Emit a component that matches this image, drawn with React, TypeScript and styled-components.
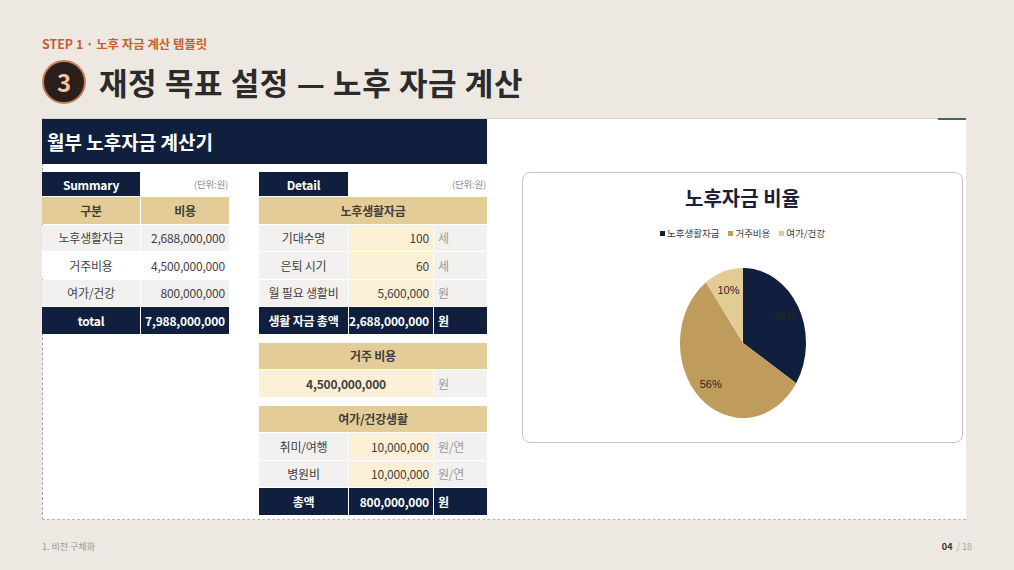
import styled, { createGlobalStyle, css } from "styled-components";

type Tone = "navy" | "gold" | "grey" | "white" | "cream" | "plain";

interface CellProps {
  $tone?: Tone;
  $align?: "left" | "center" | "right";
  $span?: number;
  $bold?: boolean;
  $muted?: boolean;
}

interface Slice {
  label: string;
  value: number;
  color: string;
}

const NAVY = "#0f1f3d";
const GOLD = "#e4cc98";

const toneColors: Record<Tone, string> = {
  navy: NAVY,
  gold: GOLD,
  grey: "#f2f1ef",
  white: "#ffffff",
  cream: "#fbefd6",
  plain: "transparent",
};

const slices: Slice[] = [
  { label: "노후생활자금", value: 34, color: "#0f1f3d" },
  { label: "거주비용", value: 56, color: "#bf9b5c" },
  { label: "여가/건강", value: 10, color: "#e2cb94" },
];

const GlobalStyle = createGlobalStyle`
  html, body {
    margin: 0;
    padding: 0;
    background: #ede8e2;
  }
  body {
    font-family: "Noto Sans CJK KR", "Noto Sans", sans-serif;
  }
`;

const Page = styled.div`
  width: 1014px;
  height: 570px;
  box-sizing: border-box;
  padding: 36px 42px 0 42px;
  background: #ede8e2;
  display: flex;
  flex-direction: column;
  overflow: hidden;
`;

const Eyebrow = styled.div`
  font-size: 12.4px;
  line-height: 16px;
  font-weight: 700;
  color: #c4622d;
`;

const TitleRow = styled.div`
  display: flex;
  align-items: center;
  gap: 13px;
  margin-top: 7px;
  height: 45px;
`;

const Badge = styled.div`
  width: 44px;
  height: 44px;
  box-sizing: border-box;
  border-radius: 50%;
  border: 2px solid #c9805a;
  background: #2a1f1b;
  color: #f2c3a5;
  display: flex;
  align-items: center;
  justify-content: center;
  font-size: 24px;
  font-weight: 700;
`;

const Heading = styled.h1`
  margin: 0;
  font-size: 31px;
  font-weight: 700;
  color: #2b2b2b;
  letter-spacing: 0.6px;
`;

const Panel = styled.div`
  position: relative;
  margin-top: 14px;
  width: 924px;
  height: 402px;
  box-sizing: border-box;
  background: #ffffff;
  border-top: 1px solid #d6d4d0;
  border-left: 1px dashed #a9a5a0;
  border-bottom: 1px dashed #b9b5b0;

  &::after {
    content: "";
    position: absolute;
    top: -1px;
    right: 0;
    width: 28px;
    height: 2px;
    background: #3c6a4c;
  }
`;

const PanelTitle = styled.div`
  width: 445px;
  height: 45px;
  margin-left: -1px;
  background: ${NAVY};
  color: #ffffff;
  font-size: 19px;
  font-weight: 700;
  display: flex;
  align-items: center;
  padding-left: 5px;
  box-sizing: border-box;
`;

const PanelBody = styled.div`
  display: flex;
  align-items: flex-start;
  margin-top: 8px;
  margin-left: -1px;
`;

const SummaryGrid = styled.div`
  display: grid;
  grid-template-columns: 98px 88px;
  grid-template-rows: 24px;
  grid-auto-rows: 26.5px;
  gap: 1px;
`;

const DetailColumn = styled.div`
  display: flex;
  flex-direction: column;
  gap: 9px;
  margin-left: 30px;
`;

const DetailGrid = styled.div<{ $header?: boolean }>`
  display: grid;
  grid-template-columns: 89px 84px 53px;
  ${(p) =>
    p.$header &&
    css`
      grid-template-rows: 24px;
    `}
  grid-auto-rows: 26.5px;
  gap: 1px;
`;

const Cell = styled.div<CellProps>`
  grid-column: span ${(p) => p.$span ?? 1};
  background: ${(p) => toneColors[p.$tone ?? "white"]};
  color: ${(p) =>
    p.$tone === "navy" ? "#ffffff" : p.$muted ? "#9a9a9a" : "#3f3f3f"};
  font-size: 12px;
  font-weight: ${(p) => (p.$bold || p.$tone === "navy" ? 700 : 400)};
  display: flex;
  align-items: center;
  justify-content: ${(p) =>
    p.$align === "left"
      ? "flex-start"
      : p.$align === "right"
      ? "flex-end"
      : "center"};
  padding: 0 4px;
  white-space: nowrap;
  box-sizing: border-box;
  letter-spacing: -0.2px;
`;

const UnitNote = styled(Cell)`
  font-size: 9.5px;
  color: #8c8c8c;
  padding-right: 1px;
`;

const ChartCard = styled.div`
  margin-left: 35px;
  width: 441px;
  height: 271px;
  box-sizing: border-box;
  border: 1px solid #c5c5c5;
  border-radius: 8px;
  display: flex;
  flex-direction: column;
  align-items: center;
  padding-top: 12px;
`;

const ChartTitle = styled.div`
  font-size: 20px;
  line-height: 26px;
  font-weight: 700;
  color: #1b1f38;
`;

const Legend = styled.div`
  display: flex;
  gap: 9px;
  margin-top: 15px;
  font-size: 9.5px;
  line-height: 14px;
  color: #3a3a3a;
`;

const LegendItem = styled.span`
  display: flex;
  align-items: center;
  gap: 2px;
`;

const Swatch = styled.span<{ $color: string }>`
  width: 5px;
  height: 5px;
  background: ${(p) => p.$color};
`;

const PieSvg = styled.svg`
  margin-top: 26px;
  display: block;
`;

const Footer = styled.div`
  display: flex;
  justify-content: space-between;
  align-items: center;
  margin-top: 20px;
  font-size: 9px;
  color: #9d9893;
`;

const PageNum = styled.span`
  color: #a8a39e;

  b {
    color: #333333;
    font-weight: 700;
    margin-right: 4px;
  }
`;

const Pie = ({ data }: { data: Slice[] }) => {
  const w = 130;
  const h = 154;
  const cx = 65;
  const cy = 77;
  const rx = 63;
  const ry = 75;
  const total = data.reduce((s, d) => s + d.value, 0);
  const point = (deg: number, k = 1) => {
    const r = (deg * Math.PI) / 180;
    return [cx + rx * k * Math.sin(r), cy - ry * k * Math.cos(r)];
  };
  let start = 0;
  return (
    <PieSvg width={w} height={h} viewBox={`0 0 ${w} ${h}`}>
      {data.map((d) => {
        const sweep = (d.value / total) * 360;
        const end = start + sweep;
        const [x1, y1] = point(start);
        const [x2, y2] = point(end);
        const [lx, ly] = point(start + sweep / 2, 0.75);
        const large = sweep > 180 ? 1 : 0;
        start = end;
        return (
          <g key={d.label}>
            <path
              d={`M ${cx} ${cy} L ${x1} ${y1} A ${rx} ${ry} 0 ${large} 1 ${x2} ${y2} Z`}
              fill={d.color}
            />
            <text
              x={lx}
              y={ly + 4}
              textAnchor="middle"
              fontSize="11"
              fontFamily="'Liberation Sans Narrow', 'Liberation Sans', Arial, sans-serif"
              fill="#2b2620"
            >
              {d.value}%
            </text>
          </g>
        );
      })}
    </PieSvg>
  );
};

export default function App() {
  return (
    <>
      <GlobalStyle />
      <Page>
        <Eyebrow>STEP 1 · 노후 자금 계산 템플릿</Eyebrow>
        <TitleRow>
          <Badge>3</Badge>
          <Heading>재정 목표 설정 — 노후 자금 계산</Heading>
        </TitleRow>

        <Panel>
          <PanelTitle>월부 노후자금 계산기</PanelTitle>
          <PanelBody>
            <SummaryGrid>
              <Cell $tone="navy">Summary</Cell>
              <UnitNote $tone="plain" $align="right">
                (단위:원)
              </UnitNote>
              <Cell $tone="gold" $bold>구분</Cell>
              <Cell $tone="gold" $bold>비용</Cell>
              <Cell $tone="grey">노후생활자금</Cell>
              <Cell $tone="grey" $align="right">2,688,000,000</Cell>
              <Cell $tone="white">거주비용</Cell>
              <Cell $tone="white" $align="right">4,500,000,000</Cell>
              <Cell $tone="grey">여가/건강</Cell>
              <Cell $tone="grey" $align="right">800,000,000</Cell>
              <Cell $tone="navy">total</Cell>
              <Cell $tone="navy" $align="right">7,988,000,000</Cell>
            </SummaryGrid>

            <DetailColumn>
              <DetailGrid $header>
                <Cell $tone="navy">Detail</Cell>
                <UnitNote $tone="plain" $align="right" $span={2}>
                  (단위:원)
                </UnitNote>
                <Cell $tone="gold" $bold $span={3}>노후생활자금</Cell>
                <Cell $tone="grey">기대수명</Cell>
                <Cell $tone="cream" $align="right">100</Cell>
                <Cell $tone="grey" $align="left" $muted>세</Cell>
                <Cell $tone="grey">은퇴 시기</Cell>
                <Cell $tone="cream" $align="right">60</Cell>
                <Cell $tone="grey" $align="left" $muted>세</Cell>
                <Cell $tone="grey">월 필요 생활비</Cell>
                <Cell $tone="cream" $align="right">5,600,000</Cell>
                <Cell $tone="grey" $align="left" $muted>원</Cell>
                <Cell $tone="navy">생활 자금 총액</Cell>
                <Cell $tone="navy" $align="right">2,688,000,000</Cell>
                <Cell $tone="navy" $align="left">원</Cell>
              </DetailGrid>

              <DetailGrid>
                <Cell $tone="gold" $bold $span={3}>거주 비용</Cell>
                <Cell $tone="cream" $bold $span={2}>4,500,000,000</Cell>
                <Cell $tone="grey" $align="left" $muted>원</Cell>
              </DetailGrid>

              <DetailGrid>
                <Cell $tone="gold" $bold $span={3}>여가/건강생활</Cell>
                <Cell $tone="grey">취미/여행</Cell>
                <Cell $tone="cream" $align="right">10,000,000</Cell>
                <Cell $tone="grey" $align="left" $muted>원/연</Cell>
                <Cell $tone="grey">병원비</Cell>
                <Cell $tone="cream" $align="right">10,000,000</Cell>
                <Cell $tone="grey" $align="left" $muted>원/연</Cell>
                <Cell $tone="navy">총액</Cell>
                <Cell $tone="navy" $align="right">800,000,000</Cell>
                <Cell $tone="navy" $align="left">원</Cell>
              </DetailGrid>
            </DetailColumn>

            <ChartCard>
              <ChartTitle>노후자금 비율</ChartTitle>
              <Legend>
                {slices.map((s) => (
                  <LegendItem key={s.label}>
                    <Swatch $color={s.color} />
                    {s.label}
                  </LegendItem>
                ))}
              </Legend>
              <Pie data={slices} />
            </ChartCard>
          </PanelBody>
        </Panel>

        <Footer>
          <span>1. 비전 구체화</span>
          <PageNum>
            <b>04</b>/ 18
          </PageNum>
        </Footer>
      </Page>
    </>
  );
}
